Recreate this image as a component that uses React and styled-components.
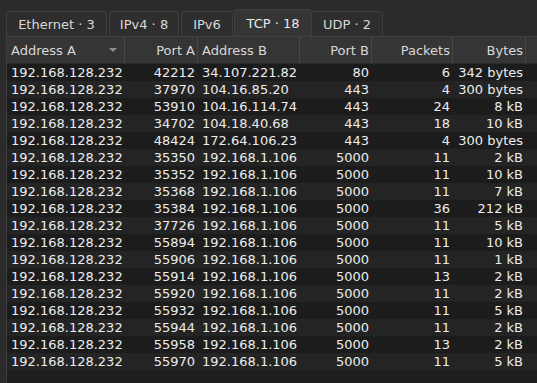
import React from 'react';
import styled, { createGlobalStyle } from 'styled-components';

const GlobalStyle = createGlobalStyle`
    html, body {
        margin: 0;
        padding: 0;
        background: #2b2b2b;
        overflow: hidden;
    }
    body {
        font-family: 'DejaVu Sans', 'Noto Sans', sans-serif;
        font-size: 13px;
    }
`;

const Window = styled.div`
    width: 537px;
    height: 383px;
    padding: 9px 0 0 6px;
    box-sizing: border-box;
    overflow: hidden;
    display: flex;
    flex-direction: column;
`;

const TabBar = styled.div`
    display: flex;
    align-items: flex-end;
    height: 27px;
`;

const Tab = styled.div`
    width: ${p => p.w}px;
    height: ${p => (p.active ? '27px' : '25px')};
    margin: ${p => (p.active ? '0 -1px 0 -1px' : '0 2px 0 0')};
    box-sizing: border-box;
    display: flex;
    align-items: center;
    justify-content: center;
    background: ${p => (p.active ? '#353535' : '#2e2e2e')};
    border: 1px solid #3f3f3f;
    border-bottom: none;
    border-radius: 3px 3px 0 0;
    color: ${p => (p.active ? '#e8e8e8' : '#d8d8d8')};
    white-space: nowrap;
    position: relative;
    z-index: ${p => (p.active ? 1 : 0)};
`;

const Pane = styled.div`
    flex: 1;
    width: 600px;
    border-top: 1px solid #3f3f3f;
    border-left: 1px solid #3f3f3f;
    background: #1e1e1e;
`;

const cols = '118px 73px 102px 72px 81px 73px 1fr';

const HeaderRow = styled.div`
    display: grid;
    grid-template-columns: ${cols};
    height: 27px;
    background: #353535;
    border-bottom: 1px solid #2a2a2a;
    box-sizing: border-box;
`;

const HeadCell = styled.div`
    display: flex;
    align-items: center;
    justify-content: ${p => (p.right ? 'flex-end' : 'space-between')};
    padding: 0 2px 0 4px;
    border-right: 1px solid #474747;
    color: #d8d8d8;
    white-space: nowrap;
    overflow: hidden;
`;

const SortArrow = styled.span`
    width: 0;
    height: 0;
    margin-right: 5px;
    border-left: 4px solid transparent;
    border-right: 4px solid transparent;
    border-top: 4px solid #8c8c8c;
`;

const Row = styled.div`
    display: grid;
    grid-template-columns: ${cols};
    height: 17px;
    background: ${p => (p.odd ? '#242424' : '#1c1c1c')};
    color: #ececec;
`;

const Cell = styled.div`
    display: flex;
    align-items: center;
    justify-content: ${p => (p.right ? 'flex-end' : 'flex-start')};
    padding: ${p => (p.right ? '0 3px 0 0' : '0 0 0 4px')};
    white-space: nowrap;
    overflow: hidden;
`;

const tabs = [
    { label: 'Ethernet · 3', w: 101 },
    { label: 'IPv4 · 8', w: 70 },
    { label: 'IPv6', w: 52 },
    { label: 'TCP · 18', w: 78, active: true },
    { label: 'UDP · 2', w: 72 },
];

const local = '192.168.128.232';
const pi = '192.168.1.106';

const rows = [
    [42212, '34.107.221.82', 80, 6, '342 bytes'],
    [37970, '104.16.85.20', 443, 4, '300 bytes'],
    [53910, '104.16.114.74', 443, 24, '8 kB'],
    [34702, '104.18.40.68', 443, 18, '10 kB'],
    [48424, '172.64.106.23', 443, 4, '300 bytes'],
    [35350, pi, 5000, 11, '2 kB'],
    [35352, pi, 5000, 11, '10 kB'],
    [35368, pi, 5000, 11, '7 kB'],
    [35384, pi, 5000, 36, '212 kB'],
    [37726, pi, 5000, 11, '5 kB'],
    [55894, pi, 5000, 11, '10 kB'],
    [55906, pi, 5000, 11, '1 kB'],
    [55914, pi, 5000, 13, '2 kB'],
    [55920, pi, 5000, 11, '2 kB'],
    [55932, pi, 5000, 11, '5 kB'],
    [55944, pi, 5000, 11, '2 kB'],
    [55958, pi, 5000, 13, '2 kB'],
    [55970, pi, 5000, 11, '5 kB'],
];

const App = () => {
    return (
        <Window>
            <GlobalStyle />
            <TabBar>
                {tabs.map(t => (
                    <Tab key={t.label} w={t.w} active={t.active}>{t.label}</Tab>
                ))}
            </TabBar>
            <Pane>
                <HeaderRow>
                    <HeadCell>Address A<SortArrow /></HeadCell>
                    <HeadCell right>Port A</HeadCell>
                    <HeadCell>Address B</HeadCell>
                    <HeadCell right>Port B</HeadCell>
                    <HeadCell right>Packets</HeadCell>
                    <HeadCell right>Bytes</HeadCell>
                    <HeadCell />
                </HeaderRow>
                {rows.map((r, i) => (
                    <Row key={r[0]} odd={i % 2 === 1}>
                        <Cell>{local}</Cell>
                        <Cell right>{r[0]}</Cell>
                        <Cell>{r[1]}</Cell>
                        <Cell right>{r[2]}</Cell>
                        <Cell right>{r[3]}</Cell>
                        <Cell right>{r[4]}</Cell>
                        <Cell />
                    </Row>
                ))}
            </Pane>
        </Window>
    );
};

export default App;
